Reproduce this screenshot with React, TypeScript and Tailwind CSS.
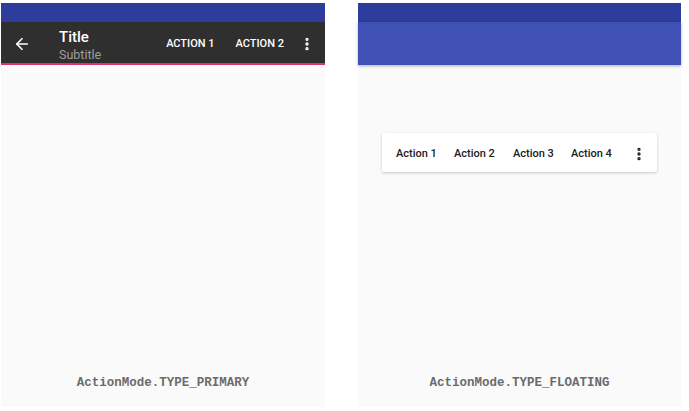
import { ArrowLeft, EllipsisVertical } from "lucide-react";

function Caption({ children }: { children: string }) {
  return (
    <div className="mt-auto pb-[18px] text-center font-['Liberation_Mono',monospace] text-[12.5px] font-bold leading-none text-[#6b6b6b]">
      {children}
    </div>
  );
}

function PrimaryPhone() {
  return (
    <div className="flex h-[404px] w-[324px] flex-col bg-[#fafafa]">
      <div className="h-[19px] bg-[#2e3d9c]" />
      <div className="flex h-[41px] items-center bg-[#2f2f2f] text-white">
        <ArrowLeft className="ml-[12px] mt-[2px] h-[18px] w-[18px]" strokeWidth={2.2} />
        <div className="ml-[28px] mt-[6px] flex flex-col font-['Roboto',sans-serif] leading-none">
          <span className="text-[15px] font-medium">Title</span>
          <span className="mt-[4px] text-[12.5px] text-[#9e9e9e]">Subtitle</span>
        </div>
        <div className="ml-auto mt-[3px] flex items-center font-['Roboto',sans-serif] text-[11px] font-medium">
          <span>ACTION 1</span>
          <span className="ml-[21px]">ACTION 2</span>
          <EllipsisVertical className="ml-[15px] mr-[10px] h-[16px] w-[16px]" strokeWidth={3} />
        </div>
      </div>
      <div className="h-[2px] bg-[#e0336b]" />
      <Caption>ActionMode.TYPE_PRIMARY</Caption>
    </div>
  );
}

function FloatingPhone() {
  return (
    <div className="flex h-[404px] w-[323px] flex-col bg-[#fafafa]">
      <div className="h-[19px] bg-[#2e3d9c]" />
      <div className="h-[43px] bg-[#3f51b5] shadow-[0_1px_3px_rgba(0,0,0,0.3)]" />
      <div className="mx-[24px] mt-[68px] flex h-[39px] items-center rounded-[2px] bg-white pl-[14px] pt-[3px] font-['Roboto',sans-serif] text-[11px] font-medium text-[#212121] shadow-[0_1px_3px_rgba(0,0,0,0.2)]">
        <span className="w-[58px]">Action 1</span>
        <span className="w-[59px]">Action 2</span>
        <span className="w-[58px]">Action 3</span>
        <span>Action 4</span>
        <EllipsisVertical className="ml-auto mr-[10px] h-[16px] w-[16px]" strokeWidth={3} />
      </div>
      <Caption>ActionMode.TYPE_FLOATING</Caption>
    </div>
  );
}

export default function App() {
  return (
    <div className="flex h-[411px] w-[689px] gap-[33px] bg-white pl-[1px] pt-[3px]">
      <PrimaryPhone />
      <FloatingPhone />
    </div>
  );
}
